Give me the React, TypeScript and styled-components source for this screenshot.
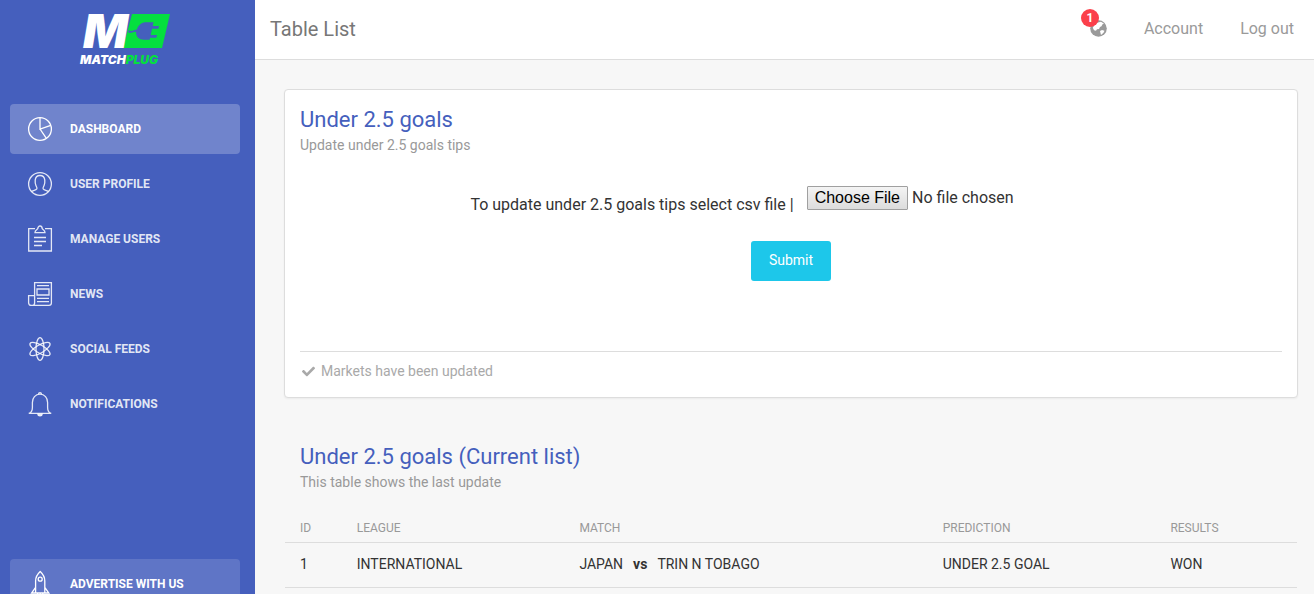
import React from "react";
import styled, { createGlobalStyle } from "styled-components";
import { FaCheck } from "react-icons/fa";

const brand = "#455fbd";

const GlobalStyle = createGlobalStyle`
  *, *::before, *::after { box-sizing: border-box; }
  body {
    margin: 0;
    background: #f7f7f7;
    color: #333;
    font-family: Roboto, "Liberation Sans", sans-serif;
    font-size: 14px;
    line-height: 20px;
  }
`;

const Layout = styled.div`
  display: flex;
  align-items: flex-start;
`;

const Sidebar = styled.aside`
  position: sticky;
  top: 0;
  flex: 0 0 255px;
  height: 100vh;
  overflow: hidden;
  background: ${brand};
`;

const LogoLink = styled.a`
  display: flex;
  justify-content: center;
  height: 104px;
  padding: 10px 5px 0 0;
`;

const LogoArt = styled.svg`
  width: 94px;
  height: 60px;
  overflow: visible;
`;

const Nav = styled.nav`
  display: flex;
  flex-direction: column;
  gap: 5px;
  padding: 0 15px 0 10px;
`;

const NavLink = styled.a<{ $tone?: "active" | "promo" }>`
  display: flex;
  flex-shrink: 0;
  align-items: center;
  gap: 15px;
  height: 50px;
  padding: 0 15px;
  margin-top: ${(p) => (p.$tone === "promo" ? "125px" : "0")};
  border-radius: 4px;
  background: ${(p) =>
    p.$tone === "active"
      ? "rgba(255, 255, 255, 0.23)"
      : p.$tone === "promo"
        ? "rgba(255, 255, 255, 0.14)"
        : "transparent"};
  color: ${(p) => (p.$tone ? "#fff" : "rgba(255, 255, 255, 0.86)")};
  font-size: 12px;
  font-weight: 700;
  text-decoration: none;
  text-transform: uppercase;
`;

const NavIcon = styled.svg`
  width: 30px;
  height: 30px;
  fill: none;
  stroke: currentColor;
  stroke-width: 1.3;
`;

const Main = styled.main`
  flex: 1;
  min-width: 0;
`;

const TopBar = styled.header`
  display: flex;
  align-items: center;
  justify-content: space-between;
  height: 60px;
  padding: 0 20px 2px 15px;
  border-bottom: 1px solid #ddd;
  background: #fff;
`;

const PageTitle = styled.h1`
  margin: 0;
  color: #777;
  font-size: 20px;
  font-weight: 400;
`;

const TopLinks = styled.div`
  display: flex;
  align-items: center;
  gap: 37px;
`;

const TopLink = styled.a`
  color: #9a9a9a;
  font-size: 16px;
  text-decoration: none;
`;

const AlertButton = styled.button`
  position: relative;
  display: flex;
  padding: 0;
  border: 0;
  background: none;
  color: #9a9a9a;
`;

const Count = styled.span`
  position: absolute;
  top: -11px;
  left: -9px;
  width: 18px;
  height: 18px;
  border-radius: 9px;
  background: #fb404b;
  color: #fff;
  font: 700 12px/18px Roboto, sans-serif;
  text-align: center;
`;

const Content = styled.div`
  padding: 29px 16px 0 29px;
`;

const Card = styled.section`
  padding: 15px;
  border: 1px solid #ddd;
  border-radius: 4px;
  background: #fff;
  box-shadow: 0 1px 2px rgba(0, 0, 0, 0.05);
`;

const Heading = styled.h2`
  margin: 0;
  color: ${brand};
  font-size: 22px;
  font-weight: 400;
  line-height: 30px;
`;

const Subtitle = styled.p`
  margin: 0;
  color: #999;
`;

const UploadForm = styled.form`
  display: flex;
  flex-direction: column;
  align-items: center;
  gap: 24px;
  padding: 31px 0 70px;
`;

const FileRow = styled.div`
  display: flex;
  flex-wrap: wrap;
  align-items: flex-start;
  justify-content: center;
  gap: 13px;
  font-size: 16px;
  line-height: 24px;
`;

const FileLabel = styled.label`
  padding-top: 7px;
`;

const FileInput = styled.input`
  width: 305px;
  height: 24px;
  color: #333;
  font: 400 16px/20px Roboto, sans-serif;

  &::file-selector-button {
    height: 24px;
    margin: 0 4px 0 0;
    padding: 0 7px;
    border: 1px solid #a0a0a0;
    border-radius: 1px;
    background: linear-gradient(#f4f4f4, #dcdcdc);
    color: #000;
    font: 400 16px/20px "Liberation Sans", sans-serif;
  }
`;

const SubmitButton = styled.button`
  height: 40px;
  padding: 0 18px 2px;
  border: 0;
  border-radius: 3px;
  background: #1dc7ea;
  color: #fff;
  font: 400 14px/20px Roboto, sans-serif;
`;

const CardFooter = styled.footer`
  display: flex;
  align-items: center;
  gap: 6px;
  padding: 9px 2px 1px;
  border-top: 1px solid #ddd;
  color: #a9a9a9;
`;

const ListSection = styled.section`
  padding: 44px 1px 0;
`;

const ListHeader = styled.div`
  padding: 0 15px;
`;

const Table = styled.table`
  width: 100%;
  margin-top: 20px;
  border-collapse: collapse;
  table-layout: fixed;
  text-align: left;
`;

const Column = styled.col<{ $share: number }>`
  width: ${(p) => p.$share}%;
`;

const HeadCell = styled.th`
  height: 30px;
  padding: 2px 8px 0;
  border-bottom: 1px solid #ddd;
  color: #999;
  font-size: 12px;
  font-weight: 400;
  text-transform: uppercase;
  &:first-child { padding-left: 15px; }
`;

const Cell = styled.td`
  height: 45px;
  padding: 0 8px 2px;
  border-bottom: 1px solid #ddd;
  &:first-child { padding-left: 15px; }
`;

const Versus = styled.b`
  margin: 0 10px;
`;

function Logo() {
  return (
    <LogoArt viewBox="0 0 94 60" role="img" aria-label="Matchplug">
      <path d="M54 4H92L84 38H45Z" fill="#05df3f" />
      <path d="M51 20c3 2.500 5-.5 8-.5C60 15 64 12.300 68 12.300h7.500L74.700 16H81l-.6 2.800h-6.300L72.700 25H79l-.6 2.800h-6.300l-.5 2H66c-5 0-8.200-3-8-8-3 0-5 2-8 .5Z" fill={brand} />
      <text x="5" y="38" fill="#fff" fontFamily="Inter, sans-serif" fontSize="47" fontStyle="italic" fontWeight="900">M</text>
      <text x="2" y="54" fill="#fff" fontFamily="Inter, sans-serif" fontSize="12" fontStyle="italic" fontWeight="900">
        MATCH<tspan fill="#05df3f">PLUG</tspan>
      </text>
    </LogoArt>
  );
}

function Globe() {
  return (
    <svg width="17" height="17" viewBox="0 0 17 17" aria-hidden="true">
      <circle cx="8.500" cy="8.500" r="8.300" fill="currentColor" />
      <path d="M8 2.500l3-.8 3 2-1.500.6-1 2-1.500.7-1 2-2 .3-1 1.500-2-.6-1.200-2.500L5 4ZM10 11l2-1 2.500.7-1 2-2.500 2.300-.5-2Z" fill="#fff" />
    </svg>
  );
}

const icons: Record<string, React.ReactNode> = {
  chart: (
    <>
      <circle cx="15" cy="15" r="11.4" />
      <path d="M15 3.6V15l10.8-3.6M15 15l6.4 9.4" />
    </>
  ),
  user: (
    <>
      <circle cx="15" cy="15" r="11.4" />
      <path d="M6.4 22.4c1.8-.9 4.6-1.3 5.4-2.5.6-1-.2-1.9-.8-3.2-.7-1.6-1-3.6-.8-5.6.3-3 2-4.6 4.8-4.6s4.5 1.6 4.8 4.6c.2 2-.1 4-.8 5.6-.6 1.3-1.4 2.2-.8 3.2.8 1.2 3.6 1.6 5.4 2.5" />
    </>
  ),
  clipboard: (
    <>
      <path d="M10 4.600H3.700v22.400h22.700V4.600H20" />
      <path d="M10 8.600c0-3 2.600-2.600 3-4.600a2 2 0 0 1 4 0c.4 2 3 1.600 3 4.600ZM9 13.500h12M9 17.500h12M9 21.500h8" />
    </>
  ),
  news: (
    <>
      <path d="M9.6 24V3.6h16.8V24c0 1.6-1 2.4-2.4 2.4H6.2c-1.6 0-2.600-1-2.600-2.600v-7.200h6V24c0 1.400-.8 2.400-2 2.400" />
      <path d="M12 10h12v6H12ZM12 6.7h12M12 19.3h12M12 22.7h12" />
    </>
  ),
  atom: (
    <>
      <ellipse cx="15" cy="15" rx="4" ry="11.4" />
      <ellipse cx="15" cy="15" rx="4" ry="11.4" transform="rotate(60 15 15)" />
      <ellipse cx="15" cy="15" rx="4" ry="11.4" transform="rotate(-60 15 15)" />
    </>
  ),
  bell: (
    <>
      <path d="M3.8 24.4c3-1 3.6-3 3.6-6v-5c0-4.6 3-8.2 7.6-8.2s7.6 3.6 7.6 8.2v5c0 3 .6 5 3.6 6Z" />
      <path d="M13.6 5c0-1.8 2.8-1.8 2.8 0M12.8 24.6c0 3 4.4 3 4.4 0" />
      <path d="M13.2 25.6h3.6" strokeWidth="2" />
    </>
  ),
  rocket: (
    <>
      <path d="M10.6 24V12c0-3.6 1.6-6.6 4.6-9.4 3 2.8 4.6 5.8 4.6 9.4v12M10.6 18.4l-4 5.6h17.2l-4-5.6" />
      <circle cx="15.2" cy="10.2" r="2" />
      <path d="M12.6 24v3M15.2 24v5M17.8 24v3" />
    </>
  ),
};

const links = [
  { label: "Dashboard", icon: "chart", tone: "active" as const },
  { label: "User Profile", icon: "user" },
  { label: "Manage Users", icon: "clipboard" },
  { label: "News", icon: "news" },
  { label: "Social Feeds", icon: "atom" },
  { label: "Notifications", icon: "bell" },
  { label: "Advertise with us", icon: "rocket", tone: "promo" as const },
];

export default function App() {
  return (
    <>
      <GlobalStyle />
      <Layout>
        <Sidebar>
          <LogoLink href="#home"><Logo /></LogoLink>
          <Nav>
            {links.map((link) => (
              <NavLink key={link.label} href={"#" + link.icon} $tone={link.tone}>
                <NavIcon viewBox="0 0 30 30" aria-hidden="true">{icons[link.icon]}</NavIcon>
                {link.label}
              </NavLink>
            ))}
          </Nav>
        </Sidebar>
        <Main>
          <TopBar>
            <PageTitle>Table List</PageTitle>
            <TopLinks>
              <AlertButton type="button" aria-label="Alerts">
                <Globe />
                <Count>1</Count>
              </AlertButton>
              <TopLink href="#account">Account</TopLink>
              <TopLink href="#logout">Log out</TopLink>
            </TopLinks>
          </TopBar>
          <Content>
            <Card>
              <Heading>Under 2.5 goals</Heading>
              <Subtitle>Update under 2.5 goals tips</Subtitle>
              <UploadForm onSubmit={(e) => e.preventDefault()}>
                <FileRow>
                  <FileLabel htmlFor="csv">To update under 2.5 goals tips select csv file |</FileLabel>
                  <FileInput id="csv" type="file" accept=".csv" />
                </FileRow>
                <SubmitButton type="submit">Submit</SubmitButton>
              </UploadForm>
              <CardFooter>
                <FaCheck size={13} />
                Markets have been updated
              </CardFooter>
            </Card>
            <ListSection>
              <ListHeader>
                <Heading>Under 2.5 goals (Current list)</Heading>
                <Subtitle>This table shows the last update</Subtitle>
              </ListHeader>
              <Table>
                <colgroup>
                  <Column $share={6.3} />
                  <Column $share={22} />
                  <Column $share={35.9} />
                  <Column $share={22.5} />
                  <Column $share={13.3} />
                </colgroup>
                <thead>
                  <tr>
                    <HeadCell>ID</HeadCell>
                    <HeadCell>League</HeadCell>
                    <HeadCell>Match</HeadCell>
                    <HeadCell>Prediction</HeadCell>
                    <HeadCell>Results</HeadCell>
                  </tr>
                </thead>
                <tbody>
                  <tr>
                    <Cell>1</Cell>
                    <Cell>INTERNATIONAL</Cell>
                    <Cell>JAPAN<Versus>vs</Versus>TRIN N TOBAGO</Cell>
                    <Cell>UNDER 2.5 GOAL</Cell>
                    <Cell>WON</Cell>
                  </tr>
                </tbody>
              </Table>
            </ListSection>
          </Content>
        </Main>
      </Layout>
    </>
  );
}
